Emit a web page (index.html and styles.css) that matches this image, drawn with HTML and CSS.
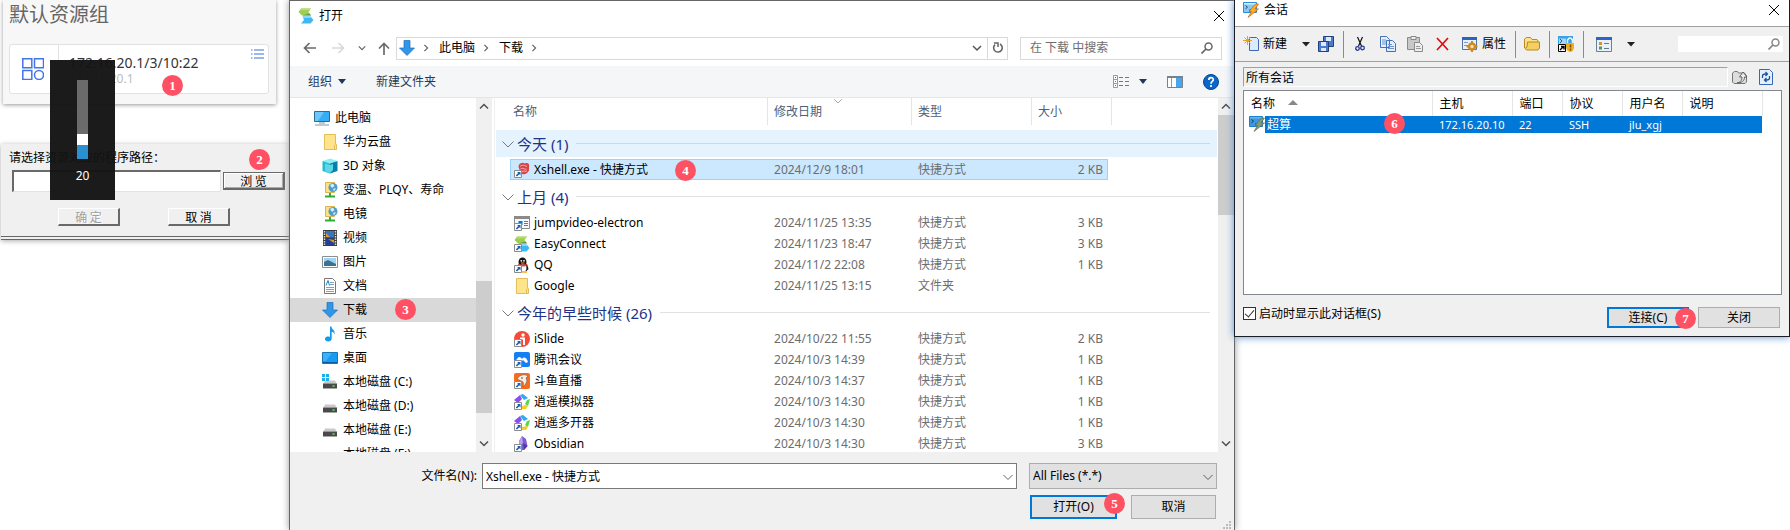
FILE: index.html
```html
<!DOCTYPE html>
<html lang="zh-CN">
<head>
<meta charset="utf-8">
<title>打开</title>
<link rel="stylesheet" href="styles.css">
</head>
<body>
<svg class="defs" aria-hidden="true">
  <symbol id="logo" viewBox="0 0 16 16"><path d="M3 .5h10L10.500 4 13 7.500H4L.5 4z" fill="#9fce4e"/><path d="M3 .5h10l-1.500 1.800H1.800z" fill="#b9dc78"/><path d="M4 7.500h9l-1.500-2z" fill="#5f9a4a"/><path d="M4.500 8.500h8L15.500 12l-3 3.500H3L6 12z" fill="#3db8f0"/><path d="M4.500 8.500h8l1.300 1.500H5.300z" fill="#86d5f7"/></symbol>
  <symbol id="down" viewBox="0 0 16 16"><path d="M5 .5h6V8h4.500L8 15.500.5 8H5z" fill="#2f96e8" stroke="#1b6fc0" stroke-width=".7"/></symbol>
  <symbol id="pc" viewBox="0 0 16 16"><path d="M.5 1.500h15v10H.5z" fill="#35aef5" stroke="#2c6c96"/><path d="M1 2h9L4 11H1z" fill="#6cc8fa"/><path d="M5 13h6M1 15h14" stroke="#7d96a7"/></symbol>
  <symbol id="folder" viewBox="0 0 16 16"><path d="M2.500.5h11v10h1v5h-12z" fill="#ffe48c" stroke="#e2bf55"/><path d="M12.500 11v4.500" stroke="#e2bf55"/></symbol>
  <symbol id="cube" viewBox="0 0 16 16"><path d="M.5 3 8 .5 15.500 3 8 5.500z" fill="#8ff0f4"/><path d="M.5 3 8 5.500v10L.5 13z" fill="#25b9d2"/><path d="M15.500 3 8 5.500v10l7.500-2.500z" fill="#0a7fa6"/><path d="M3 5.500 8 7l3-1v6l-3 3-5-2z" fill="#5ad7e8"/></symbol>
  <symbol id="net" viewBox="0 0 16 16"><path d="M3.500.5h9v10h-9z" fill="#ffe082" stroke="#d9b44a"/><circle cx="11" cy="5.500" r="4.500" fill="#4f9bcb"/><path d="M8 3l3-1.500L12.500 4 10 6zM11 7l3-1-2 3.500z" fill="#d8eef7"/><path d="M8 11v3.500M3 14.500h10" stroke="#2fae36" stroke-width="2"/></symbol>
  <symbol id="video" viewBox="0 0 16 16"><path d="M1 0h14v16H1z" fill="#3a3a3a"/><path d="M4 1h8v6.500H4z" fill="#3674c9"/><path d="M4 8.500h8V15H4z" fill="#233f99"/><path d="M4 3l4 4H4zM6 9l6 4v-3z" fill="#d79a28"/><path d="M2.500 1v14M13.500 1v14" stroke="#ddd" stroke-width="1.500" stroke-dasharray="1.500 1"/></symbol>
  <symbol id="image" viewBox="0 0 16 16"><path d="M.5 2.500h15v11H.5z" fill="#fff" stroke="#8d8d8d"/><path d="M2 4h12v8H2z" fill="#9fd4f2"/><path d="M2 8l4-2 8 4v2H2z" fill="#3d7390"/></symbol>
  <symbol id="doc" viewBox="0 0 16 16"><path d="M2.500.5h8l3 3v12h-11z" fill="#fff" stroke="#777"/><path d="M8 4.500h4M8 6.500h4M4 9.500h8M4 11.500h8M4 13.500h8" stroke="#7fa1bb"/><path d="M4 7.500l2-5 1.500 5" stroke="#1c7fc6" fill="none"/></symbol>
  <symbol id="music" viewBox="0 0 16 16"><path d="M8 .5h1.500c0 3 4 3.500 3 8-.5-2-1.500-2.500-2.800-2.800V12.500C9.700 17 2 16 3 12.500c.8-2 3-2.500 5-1.500z" fill="#149bea"/></symbol>
  <symbol id="desk" viewBox="0 0 16 16"><path d="M.5 2.500h15v11H.5z" fill="#159bf2" stroke="#1974b4"/><path d="M1 3h9l-6 8H1z" fill="#3bb1fa"/><path d="M1 12.500h14" stroke="#0c5c9e"/></symbol>
  <symbol id="disk" viewBox="0 0 16 16"><path d="M3 6.500h10l1.500 3h-13z" fill="#c9c9c9"/><path d="M1 9.500h14v5H1z" fill="#4a4a4a"/><path d="M10.500 12h2" stroke="#4bf04f" stroke-width="1.500"/></symbol>
  <symbol id="diskc" viewBox="0 0 16 16"><use href="#disk"/><path d="M0 0h3v3H0zM4 0h3v3H4zM0 4h3v3H0zM4 4h3v3H4z" fill="#1bb1e7"/></symbol>
  <symbol id="short" viewBox="0 0 16 16"><path d="M.5 8.500h7v7h-7z" fill="#fff" stroke="#8c8c8c"/><path d="M3 10h3.500v3.500L5.300 12.300 3 14.600 1.800 13.400 4.200 11z" fill="#1d5eae"/></symbol>
  <symbol id="xshell" viewBox="0 0 16 16"><path d="M4.500 5C4.500 1 9 0 11 1.500c3-1.500 5 1 4 4 1 6-5 8-8 6z" fill="#d9444a"/><path d="M6 4.500c2-2 5-1 7 0M6.500 7c3-2 4 1 6 0M8 10c2-2 3 0 5-1" stroke="#ffb9b3" fill="none"/><use href="#short"/></symbol>
  <symbol id="jump" viewBox="0 0 16 16"><path d="M.5 1.500h15v12H.5z" fill="#f8f8f8" stroke="#8a8a8a"/><path d="M0 1h16v3H0z" fill="#8a8a8a"/><path d="M4.500 6h4v4h-4z" fill="#0874ce"/><path d="M10 6.500h4M10 8.500h4M10 10.500h4" stroke="#777"/><use href="#short"/></symbol>
  <symbol id="easy" viewBox="0 0 16 16"><use href="#logo"/><use href="#short"/></symbol>
  <symbol id="qq" viewBox="0 0 16 16"><ellipse cx="8.500" cy="5" rx="4" ry="4.500" fill="#111"/><path d="M4.500 7h8.500l1.500 5-2 2H5z" fill="#111"/><ellipse cx="9" cy="11" rx="3.500" ry="3.500" fill="#fff"/><circle cx="7.300" cy="3.800" r=".9" fill="#fff"/><circle cx="10" cy="3.800" r=".9" fill="#fff"/><path d="M4.500 7.500c3 1.500 6 1.500 8.500 0" stroke="#e53a2f" stroke-width="1.700" fill="none"/><path d="M8 15h5" stroke="#f5a91d" stroke-width="1.500"/><path d="M7 6h3.500" stroke="#f5a91d"/><use href="#short"/></symbol>
  <symbol id="islide" viewBox="0 0 16 16"><circle cx="8" cy="8" r="8" fill="#f44b38"/><circle cx="9" cy="4" r="1.700" fill="#fff"/><path d="M6 7.500h4V14" stroke="#fff" stroke-width="2" fill="none"/><use href="#short"/></symbol>
  <symbol id="tencent" viewBox="0 0 16 16"><rect width="16" height="15" rx="2" fill="#1480f4"/><path d="M2 9c2-6 5-4 6-2 2-3 5-1 6 3l-2 1-3-3-3 3z" fill="#fff"/><use href="#short"/></symbol>
  <symbol id="douyu" viewBox="0 0 16 16"><rect width="16" height="16" rx="2" fill="#f76b1c"/><path d="M3 6c3-5 8-5 11-3l-2 2c2 3 0 6-3 9 1-4 0-6-2-6z" fill="#f5eee4" stroke="#7a6354" stroke-width=".7"/><circle cx="8" cy="5" r=".8" fill="#444"/><use href="#short"/></symbol>
  <symbol id="xiao" viewBox="0 0 16 16"><path d="M0 6l6-5 2 4-4 4z" fill="#8a4df2"/><path d="M6 1l3-1 5 4-4 2z" fill="#30a9ee"/><path d="M13 6l3-1-2 7-3-2z" fill="#5ad64d"/><path d="M14 12l-2 3H8v-3l4-1z" fill="#f2cd22"/><use href="#short"/></symbol>
  <symbol id="obs" viewBox="0 0 16 16"><path d="M8 0l4 3 1.500 7L10 14H6L5 5z" fill="#7d5cd1"/><path d="M8 0l1 7-3 3-1-5z" fill="#b7a0f1"/><path d="M9 7l4.500 3L10 14z" fill="#5434ab"/><use href="#short"/></symbol>
  <symbol id="session" viewBox="0 0 16 16"><path d="M.5 .5h13v10H.5z" fill="#8cc8f4" stroke="#2b8bd4"/><path d="M1 1h12v1.500H1z" fill="#d5ecfc"/><path d="M2.500 3.500l2 1.700-2 1.600M6 8h2.500" stroke="#174f8b" fill="none"/><path d="M12.500 2h3L12 7h3.500L5 15.500 8.500 9.500H6z" fill="#ffae20" stroke="#c8601b" stroke-width=".7"/></symbol>
  <symbol id="session-on" viewBox="0 0 16 16"><path d="M.5 .5h13v10H.5z" fill="#3f97dc" stroke="#1f7ed0"/><path d="M1 1h12v1.500H1z" fill="#6bb2e6"/><path d="M2.500 3.500l2 1.700-2 1.600M6 8h2.500" stroke="#0d3f78" fill="none"/><path d="M12.500 2h3L12 7h3.500L5 15.500 8.500 9.500H6z" fill="#859b6c" stroke="#5d6f62" stroke-width=".7"/></symbol>
  <symbol id="chev" viewBox="0 0 10 10"><path d="M1 3l4 4 4-4" fill="none" stroke="currentColor" stroke-width="1.500"/></symbol>
  <symbol id="thin" viewBox="0 0 12 12"><path d="M.5 3.500L6 9l5.500-5.500" fill="none" stroke="currentColor"/></symbol>
  <symbol id="close" viewBox="0 0 10 10"><path d="M0 0l10 10M10 0L0 10" stroke="#000" fill="none"/></symbol>
  <symbol id="glass" viewBox="0 0 12 12"><circle cx="7.500" cy="4.500" r="3.500" fill="none" stroke="currentColor" stroke-width="1.500"/><path d="M5 7L.5 11.500" stroke="currentColor" stroke-width="1.700"/></symbol>
</svg>

<main class="stage">
  <section class="left">
    <div class="resource">
      <h1>默认资源组</h1>
      <div class="card">
        <div class="card-icon"><svg width="22" height="22" viewBox="0 0 22 22" fill="none" stroke="#4475e8" stroke-width="1.500"><path d="M.8.8h9v9h-9zM12.500.8h9v9h-9zM.8 12.500h9v9h-9z"/><circle cx="17" cy="17" r="4.500"/></svg></div>
        <div class="card-text"><strong>172.16.20.1/3/10:22</strong><small>172.16.20.1</small></div>
        <svg class="menu" width="13" height="10" viewBox="0 0 13 10"><path d="M0 1h1.500M3 1h10M0 5h1.500M3 5h10M0 9h1.500M3 9h10" stroke="#3b6fe0"/></svg>
        <span class="badge b1">1</span>
      </div>
    </div>
    <form class="legacy">
      <label for="path">请选择资源对应的程序路径：</label>
      <div class="legacy-row"><input id="path" type="text"><button type="button" class="raised default">浏 览</button></div>
      <div class="legacy-actions"><button type="button" class="raised" disabled>确 定</button><button type="button" class="raised">取 消</button></div>
      <span class="badge b2">2</span>
    </form>
    <div class="volume"><div class="track"><i></i><b></b></div><span>20</span></div>
  </section>

  <section class="dialog">
    <header class="title"><svg width="16" height="16"><use href="#logo"/></svg><span>打开</span><button aria-label="关闭"><svg width="10" height="10"><use href="#close"/></svg></button></header>
    <nav class="nav">
      <button class="w28" aria-label="后退"><svg width="13" height="12" viewBox="0 0 13 12" fill="none" stroke="#6b6b6b" stroke-width="1.700"><path d="M13 6H1.500M6.500 1l-5 5 5 5"/></svg></button>
      <button class="w28" aria-label="前进"><svg width="13" height="12" viewBox="0 0 13 12" fill="none" stroke="#d9d9d9" stroke-width="1.700"><path d="M0 6h11.500M6.500 1l5 5-5 5"/></svg></button>
      <button class="w18" aria-label="历史"><svg width="8" height="8"><use href="#chev"/></svg></button>
      <button class="w23" aria-label="上移"><svg width="12" height="13" viewBox="0 0 12 13" fill="none" stroke="#6b6b6b" stroke-width="1.700"><path d="M6 13V1.500M1 6.500l5-5 5 5"/></svg></button>
      <div class="address"><svg width="16" height="16"><use href="#down"/></svg><svg class="crumb" width="8" height="8"><use href="#chev"/></svg><a href="#pc-item">此电脑</a><svg class="crumb" width="8" height="8"><use href="#chev"/></svg><a href="#dl-item">下载</a><svg class="crumb" width="8" height="8"><use href="#chev"/></svg>
        <button class="drop" aria-label="展开"><svg width="10" height="10"><use href="#chev"/></svg></button><button class="refresh" aria-label="刷新"><svg width="12" height="12" viewBox="0 0 12 12"><path d="M8 2a4.300 4.300 0 1 1-5 .6" fill="none" stroke="#666" stroke-width="1.600"/><path d="M2 1h4v4" fill="none" stroke="#666" stroke-width="1.500"/></svg></button></div>
      <div class="search"><input type="text" aria-label="搜索" placeholder="在 下载 中搜索"><svg width="12" height="12"><use href="#glass"/></svg></div>
    </nav>
    <div class="tools"><button>组织<svg width="8" height="5" viewBox="0 0 8 5"><path d="M0 0h8L4 5z" fill="#1e395b"/></svg></button><button>新建文件夹</button><span class="grow"></span>
      <button class="view" aria-label="视图"><svg width="16" height="13" viewBox="0 0 16 13"><path d="M.5.500h4v12h-4zM.5 4.500h4M.5 8.500h4" fill="#fff" stroke="#999"/><path d="M6 2.500h10M6 6.500h10M6 10.500h10" stroke="#777" stroke-dasharray="4 2"/><path d="M2 2h1v1H2z" fill="#3a7a3a"/><path d="M2 6h1v1H2z" fill="#2a87d8"/><path d="M2 10h1v1H2z" fill="#c33"/></svg><svg width="8" height="5" viewBox="0 0 8 5"><path d="M0 0h8L4 5z" fill="#1e395b"/></svg></button>
      <button aria-label="预览窗格"><svg width="16" height="12" viewBox="0 0 16 12"><path d="M.5.500h15v11H.5z" fill="#fff" stroke="#77828c"/><path d="M0 1h16" stroke="#77828c" stroke-width="2"/><path d="M4.500 2v9" stroke="#999"/><path d="M9 2h6v9H9z" fill="#4aa6ec"/></svg></button>
      <button aria-label="帮助"><svg width="16" height="16" viewBox="0 0 16 16"><circle cx="8" cy="8" r="7.500" fill="#0a66c8" stroke="#07448f"/><path d="M5.800 6c0-3 4.500-3 4.500-.3C10.300 7.500 8 7.500 8 9.700M8 11v2" fill="none" stroke="#fff" stroke-width="1.700"/></svg></button></div>
    <div class="browser">
      <ul class="tree">
        <li class="root" id="pc-item"><svg><use href="#pc"/></svg>此电脑</li>
        <li><svg><use href="#folder"/></svg>华为云盘</li>
        <li><svg><use href="#cube"/></svg>3D 对象</li>
        <li><svg><use href="#net"/></svg>变温、PLQY、寿命</li>
        <li><svg><use href="#net"/></svg>电镜</li>
        <li><svg><use href="#video"/></svg>视频</li>
        <li><svg><use href="#image"/></svg>图片</li>
        <li><svg><use href="#doc"/></svg>文档</li>
        <li class="on" id="dl-item"><svg><use href="#down"/></svg>下载<span class="badge b3">3</span></li>
        <li><svg><use href="#music"/></svg>音乐</li>
        <li><svg><use href="#desk"/></svg>桌面</li>
        <li><svg><use href="#diskc"/></svg>本地磁盘 (C:)</li>
        <li><svg><use href="#disk"/></svg>本地磁盘 (D:)</li>
        <li><svg><use href="#disk"/></svg>本地磁盘 (E:)</li>
        <li><svg><use href="#disk"/></svg>本地磁盘 (F:)</li>
      </ul>
      <div class="bar"><svg class="up"><use href="#chev"/></svg><i class="lead"></i><i class="thumb tall"></i><i class="grow"></i><svg><use href="#chev"/></svg></div>
      <div class="files">
        <table>
          <colgroup><col class="c-in"><col class="c-name"><col class="c-date"><col class="c-type"><col class="c-size"><col class="c-gap"><col></colgroup>
          <thead><tr><th colspan="2" class="first">名称</th><th><svg class="sort" width="8" height="8"><use href="#thin"/></svg>修改日期</th><th>类型</th><th colspan="2">大小</th><th></th></tr></thead>
          <tbody>
            <tr class="group hot"><td colspan="7"><div><svg><use href="#thin"/></svg>今天 (1)<hr></div></td></tr>
            <tr class="sel"><td></td><td><div class="nm"><svg><use href="#xshell"/></svg>Xshell.exe - 快捷方式<span class="badge b4">4</span></div></td><td>2024/12/9 18:01</td><td>快捷方式</td><td>2 KB</td></tr>
          </tbody>
          <tbody>
            <tr class="group"><td colspan="7"><div><svg><use href="#thin"/></svg>上月 (4)<hr></div></td></tr>
            <tr><td></td><td><div class="nm"><svg><use href="#jump"/></svg>jumpvideo-electron</div></td><td>2024/11/25 13:35</td><td>快捷方式</td><td>3 KB</td></tr>
            <tr><td></td><td><div class="nm"><svg><use href="#easy"/></svg>EasyConnect</div></td><td>2024/11/23 18:47</td><td>快捷方式</td><td>3 KB</td></tr>
            <tr><td></td><td><div class="nm"><svg><use href="#qq"/></svg>QQ</div></td><td>2024/11/2 22:08</td><td>快捷方式</td><td>1 KB</td></tr>
            <tr><td></td><td><div class="nm"><svg><use href="#folder"/></svg>Google</div></td><td>2024/11/25 13:15</td><td>文件夹</td><td></td></tr>
          </tbody>
          <tbody>
            <tr class="group"><td colspan="7"><div><svg><use href="#thin"/></svg>今年的早些时候 (26)<hr></div></td></tr>
            <tr><td></td><td><div class="nm"><svg><use href="#islide"/></svg>iSlide</div></td><td>2024/10/22 11:55</td><td>快捷方式</td><td>2 KB</td></tr>
            <tr><td></td><td><div class="nm"><svg><use href="#tencent"/></svg>腾讯会议</div></td><td>2024/10/3 14:39</td><td>快捷方式</td><td>1 KB</td></tr>
            <tr><td></td><td><div class="nm"><svg><use href="#douyu"/></svg>斗鱼直播</div></td><td>2024/10/3 14:37</td><td>快捷方式</td><td>1 KB</td></tr>
            <tr><td></td><td><div class="nm"><svg><use href="#xiao"/></svg>逍遥模拟器</div></td><td>2024/10/3 14:30</td><td>快捷方式</td><td>1 KB</td></tr>
            <tr><td></td><td><div class="nm"><svg><use href="#xiao"/></svg>逍遥多开器</div></td><td>2024/10/3 14:30</td><td>快捷方式</td><td>1 KB</td></tr>
            <tr><td></td><td><div class="nm"><svg><use href="#obs"/></svg>Obsidian</div></td><td>2024/10/3 14:30</td><td>快捷方式</td><td>3 KB</td></tr>
          </tbody>
        </table>
      </div>
      <div class="bar"><svg class="up"><use href="#chev"/></svg><i class="thumb short"></i><i class="grow"></i><svg><use href="#chev"/></svg></div>
    </div>
    <form class="foot">
      <label for="fname">文件名(N):</label>
      <div class="combo"><input id="fname" type="text" value="Xshell.exe - 快捷方式"><svg width="10" height="10"><use href="#thin"/></svg></div>
      <div class="combo filter"><select aria-label="文件类型"><option>All Files (*.*)</option></select><svg width="10" height="10"><use href="#thin"/></svg></div>
      <div class="buttons"><button type="button" class="flat primary">打开(O)</button><button type="button" class="flat">取消</button><span class="badge b5">5</span></div>
      <svg class="grip" width="9" height="9" viewBox="0 0 9 9"><path d="M6 0h2v2H6zM3 3h2v2H3zM6 3h2v2H6zM0 6h2v2H0zM3 6h2v2H3zM6 6h2v2H6z" fill="#bbb"/></svg>
    </form>
  </section>

  <section class="session">
    <header class="stitle"><svg width="16" height="16"><use href="#session"/></svg><span>会话</span><button aria-label="关闭"><svg width="10" height="10"><use href="#close"/></svg></button></header>
    <div class="stools">
      <button class="new"><svg width="16" height="16" viewBox="0 0 16 16"><path d="M6.500 1.500h7l2 2v11h-9z" fill="#dcebfb" stroke="#3f68b0"/><path d="M4.500 0v9M0 4.500h9M1.500 1.500l6 6M7.500 1.500l-6 6" stroke="#e9a11d"/></svg>新建</button>
      <button class="arrow" aria-label="新建选项"><svg width="8" height="5" viewBox="0 0 8 5"><path d="M0 0h8L4 4.500z" fill="#222"/></svg></button>
      <button class="save" aria-label="全部保存"><svg width="16" height="16" viewBox="0 0 16 16"><path d="M5.500.5h10v10h-10z" fill="#4c7bcb" stroke="#22427e"/><path d="M8 1h5v4H8z" fill="#dfe9f8"/><path d="M.5 5.500h10v10H.5z" fill="#4c7bcb" stroke="#22427e"/><path d="M3 6h5v4H3zM3 12h5v3H3z" fill="#dfe9f8"/></svg></button>
      <i class="sep"></i>
      <button class="cut" aria-label="剪切"><svg width="10" height="16" viewBox="0 0 10 16" fill="none"><path d="M2.500 1l4 9M7.500 1l-4 9" stroke="#111" stroke-width="1.200"/><circle cx="2.500" cy="12.500" r="1.800" stroke="#27358f" stroke-width="1.300"/><circle cx="7.500" cy="12" r="1.800" stroke="#27358f" stroke-width="1.300"/></svg></button>
      <button class="copy" aria-label="复制"><svg width="16" height="16" viewBox="0 0 16 16"><path d="M.5.500h6l3 3v8h-9zM6.500 4.500h6l3 3v8h-9z" fill="#e3eefc" stroke="#4470b8"/><path d="M2 4h4M2 6h4M2 8h4M8 8.500h4M8 10.500h6M8 12.500h6" stroke="#6d94d0"/></svg></button>
      <button class="paste" aria-label="粘贴"><svg width="16" height="16" viewBox="0 0 16 16"><path d="M.5 1.500h12v12H.5z" fill="#c8c8c8" stroke="#8a8a8a"/><path d="M4 .5h5v3H4z" fill="#eee" stroke="#888"/><path d="M7.500 6.500h5l3 3v6h-8z" fill="#eee" stroke="#8a8a8a"/><path d="M9 10.500h4M9 12.500h5" stroke="#999"/></svg></button>
      <button class="del" aria-label="删除"><svg width="13" height="14" viewBox="0 0 13 14"><path d="M1 1l11 12M12 1L1 13" stroke="#e00b0b" stroke-width="1.700"/></svg></button>
      <button class="prop"><svg width="16" height="16" viewBox="0 0 16 16"><path d="M.5 1.500h14v12H.5z" fill="#e9f2fc" stroke="#54739f"/><path d="M0 1h15v3H0z" fill="#2c63bd"/><path d="M2 6.500h4M2 9.500h4" stroke="#7a9ac7"/><circle cx="10" cy="10.500" r="3" fill="#f4e0b8" stroke="#d08a24" stroke-width="2.500"/><path d="M10 5v2M10 14v2M4.500 10.500h2M13.500 10.500h2" stroke="#d08a24" stroke-width="2"/></svg>属性</button>
      <i class="sep"></i>
      <button class="tb" aria-label="文件夹"><svg width="16" height="14" viewBox="0 0 16 14"><path d="M.5 11V2l2-1.500h4l1.500 2h5l1 1.500v1" fill="#fbe28c" stroke="#b88a1c"/><path d="M3.500 5h12v6l-1.500 2H2.500L1 11.500 3 10z" fill="#f5cf62" stroke="#b88a1c"/></svg></button>
      <i class="sep"></i>
      <button class="tb" aria-label="锁定"><svg width="16" height="16" viewBox="0 0 16 16"><path d="M0 0h15v8H0z" fill="#3ba2e6"/><path d="M1 2.500h7V8H1z" fill="#a9d5f5"/><path d="M2 3l2 2-2 2" stroke="#1a5a9a" fill="none"/><path d="M9.500 8V4q2.500-4 5 0v4" stroke="#e8f3fb" stroke-width="1.500" fill="none"/><path d="M8 7h8v5q-1 4-4 4-3-1-4-4z" fill="#efae1d"/><path d="M12.500 8.500v3M12.500 12.500v2" stroke="#7a4b04" stroke-width="1.500"/><path d="M.5 8.500h7v7h-7z" fill="#fff" stroke="#000"/><path d="M2 14l3-3M3 10.500h3v3" stroke="#000" stroke-width="1.400" fill="none"/></svg></button>
      <i class="sep"></i>
      <button class="vw" aria-label="视图"><svg width="16" height="15" viewBox="0 0 16 15"><path d="M.5.500h15v14H.5z" fill="#e8f0fa" stroke="#6d7f99"/><path d="M0 0h16v3H0z" fill="#2d63c8"/><path d="M3 5h3v3H3z" fill="#e38c25"/><path d="M3 9.500h3v3H3z" fill="#3aa843"/><path d="M8 6.500h5M8 11.500h5" stroke="#68768a"/></svg><svg width="8" height="5" viewBox="0 0 8 5"><path d="M0 0h8L4 4.500z" fill="#222"/></svg></button>
      <div class="ssearch"><input type="text" aria-label="查找会话"><svg width="12" height="12"><use href="#glass"/></svg></div>
    </div>
    <div class="where"><input type="text" aria-label="位置" value="所有会话" readonly>
      <button aria-label="上一级"><svg width="16" height="14" viewBox="0 0 16 14"><path d="M.5 12V3l2-1.500h3l1 1.500h6l2 3v6l-1.500 1.500H2z" fill="#ddd" stroke="#777"/><path d="M5 13c4-1 5-3 5-6H7.500L11 2l4 5h-2.500c0 4-3 6-7.500 6z" fill="#eee" stroke="#555" stroke-width=".9"/></svg></button>
      <button aria-label="刷新"><svg width="14" height="16" viewBox="0 0 14 16"><path d="M.5.500h10l3 3v12H.5z" fill="#e5f0fd" stroke="#3568b8"/><path d="M3.500 9V7q0-2 3-2H8M6.500 3l2 2-2 2M10.500 7v2q0 2-3 2H6M7.500 9l-2 2 2 2" stroke="#1b53a2" stroke-width="1.300" fill="none"/></svg></button></div>
    <div class="slist">
      <table>
        <colgroup><col class="s188"><col class="s80"><col class="s50"><col class="s60"><col class="s60"><col class="s80"></colgroup>
        <thead><tr><th>名称<svg width="10" height="5" viewBox="0 0 10 5"><path d="M0 5h10L5 0z" fill="#888"/></svg></th><th>主机</th><th>端口</th><th>协议</th><th>用户名</th><th>说明</th></tr></thead>
        <tbody><tr><td><div><svg width="16" height="16"><use href="#session-on"/></svg><span>超算</span><em class="badge b6">6</em></div></td><td>172.16.20.10</td><td>22</td><td>SSH</td><td>jlu_xgj</td><td></td></tr></tbody>
      </table>
    </div>
    <footer class="sfoot"><input type="checkbox" id="boot" checked><label for="boot">启动时显示此对话框(S)</label><button class="flat primary">连接(C)</button><button class="flat">关闭</button><span class="badge b7">7</span></footer>
  </section>
</main>
</body>
</html>
```

FILE: styles.css
```css
* { box-sizing: border-box; }
body { margin: 0; background: #fff; color: #000; font: 12px/16px "Noto Sans", "Noto Sans CJK SC", sans-serif; overflow: hidden; }
button, input, select { font: inherit; color: inherit; margin: 0; border-radius: 0; }
button { border: 0; padding: 0; background: none; display: flex; align-items: center; justify-content: center; white-space: nowrap; }
svg { flex: none; display: block; }
a { color: inherit; text-decoration: none; }
.defs { position: absolute; width: 0; height: 0; }
.grow { flex: 1; }
.stage { display: grid; grid-template-columns: 289px minmax(0, 1fr) 555px; grid-template-rows: minmax(0, 1fr); height: 100vh; align-items: start; }

.badge { position: absolute; width: 21px; height: 21px; border-radius: 50%; background: #ff5163; color: #fff; font: 700 13px/21px "Liberation Serif", serif; text-align: center; }
.b1 { left: 152px; top: 30px; }
.b2 { right: 19px; top: 5px; }
.b3 { left: 105px; top: 1px; }
.b4 { left: 161px; top: 0; }
.b5 { left: 75px; top: -2px; }
.b6 { left: 140px; top: -3px; }
.b7 { right: 93px; top: 13px; }

/* resource group and path prompt */
.left { position: relative; height: 100%; overflow: hidden; }
.resource { margin: 0 13px 0 3px; height: 104px; padding: 0 7px 0 6px; background: #f7f7f7; box-shadow: 0 1px 4px #999; }
.resource h1 { margin: 0; padding: 1px 0 16px; height: 44px; font-size: 20px; line-height: 27px; font-weight: 400; color: #666; }
.card { position: relative; display: flex; height: 50px; border: 1px solid #e2e2e2; border-radius: 3px; background: #fff; }
.card-icon { width: 49px; padding-right: 2px; display: flex; align-items: center; justify-content: center; border-right: 1px solid #e2e2e2; }
.card-text { flex: 1; padding: 9px 0 0 10px; }
.card-text strong { display: block; font-size: 14px; line-height: 18px; font-weight: 400; color: #333; }
.card-text small { display: block; font-size: 12px; line-height: 14px; color: #bbb; }
.menu { margin: 4px 4px; }
.legacy { position: relative; margin: 40px 0 0 1px; height: 96px; padding: 5px 4px 0 8px; background: #f0f0f0; border-bottom: 4px double #666; box-shadow: 0 1px 5px #aaa; font-family: "Noto Sans CJK SC", sans-serif; }
.legacy label { display: block; line-height: 16px; }
.legacy-row { display: flex; align-items: center; gap: 2px; padding: 5px 0 0 3px; }
.legacy-row input { flex: 1; min-width: 0; height: 22px; border: 1px solid #e3e3e3; border-top: 2px solid #696969; border-left: 2px solid #696969; background: #fff; }
.raised { width: 62px; height: 18px; border: 1px solid #fff; border-right: 2px solid #696969; border-bottom: 2px solid #696969; background: #f0f0f0; word-spacing: normal; }
.raised.default { border-top-color: #696969; border-left-color: #696969; box-shadow: inset 1px 1px #fff, inset -1px -1px #aaa; }
.raised:disabled { color: #a0a0a0; text-shadow: 1px 1px #fff; }
.legacy-actions { display: flex; gap: 48px; padding: 16px 0 0 49px; }
.volume { position: absolute; left: 50px; top: 60px; width: 65px; height: 140px; padding-top: 20px; background: rgba(20, 20, 20, .97); color: #fff; display: flex; flex-direction: column; align-items: center; gap: 9px; }
.track { width: 11px; height: 79px; background: #6b6b6b; display: flex; flex-direction: column; justify-content: flex-end; }
.track i { height: 11px; background: #fff; }
.track b { height: 14px; background: #2a90d0; }

/* file dialog */
.dialog { height: 100%; display: flex; flex-direction: column; border: 1px solid #666; border-bottom: 0; background: #fff; box-shadow: 0 0 7px #999; position: relative; }
.title { display: flex; align-items: center; height: 29px; padding: 0 10px 0 8px; gap: 5px; }
.title button { margin-left: auto; }
.nav { display: flex; align-items: center; height: 36px; padding: 0 12px 0 5px; gap: 1px; color: #666; }
.w28 { width: 28px; }
.w18 { width: 18px; }
.w23 { width: 23px; }
.address { flex: 1; display: flex; align-items: center; height: 23px; padding-left: 2px; border: 1px solid #d9d9d9; color: #000; }
.address a { line-height: 20px; }
.crumb { transform: rotate(-90deg); margin: 0 9px 0 7px; color: #666; }
.drop { margin-left: auto; width: 20px; color: #555; }
.refresh { width: 20px; height: 21px; border-left: 1px solid #d9d9d9; }
.search { width: 202px; height: 23px; margin-left: 11px; display: flex; align-items: center; border: 1px solid #d9d9d9; padding: 0 8px 0 9px; }
.search input { flex: 1; min-width: 0; border: 0; padding: 0; outline: 0; }
.search input::placeholder { color: #6d6d6d; opacity: 1; }
.tools { display: flex; align-items: center; height: 32px; padding: 0 15px 0 18px; gap: 20px; background: #f5f6f8; border-bottom: 1px solid #e5e6e8; color: #1e395b; }
.tools button { gap: 6px; }
.tools button:nth-child(2) { margin-left: 10px; }
.view svg + svg { margin-left: 4px; }
.browser { flex: 1; min-height: 0; display: flex; }
.tree { list-style: none; margin: 0; padding: 8px 0 0; width: 186px; overflow: hidden; }
.tree li { position: relative; display: flex; align-items: center; gap: 5px; height: 24px; padding-left: 32px; white-space: nowrap; }
.tree li svg { width: 16px; height: 16px; }
.tree li.root { padding-left: 24px; }
.tree .on { background: #d9d9d9; }
.bar { width: 16px; display: flex; flex-direction: column; background: #f0f0f0; color: #505050; }
.bar svg { width: 16px; height: 17px; padding: 3px; }
.bar .up { transform: rotate(180deg); }
.lead { height: 166px; }
.thumb { background: #cdcdcd; }
.tall { height: 132px; }
.short { height: 100px; }
.files { flex: 1; min-width: 0; overflow: hidden; margin-left: 2px; border-left: 1px solid #f0f0f0; padding: 0 1px; }
table { border-collapse: collapse; table-layout: fixed; width: 100%; }
th, td { padding: 0; font-weight: 400; text-align: left; white-space: nowrap; }
.c-in { width: 14px; }
.c-name { width: 257px; }
.c-date { width: 144px; }
.c-type { width: 120px; }
.c-size { width: 77px; }
.c-gap { width: 3px; }
.files th { position: relative; height: 27px; padding-left: 7px; color: #4c607a; box-shadow: inset 1px 0 #e5e5e5; }
.files th.first { padding-left: 17px; box-shadow: none; }
.sort { position: absolute; left: 67px; top: -1px; color: #777; }
.files td { height: 21px; line-height: 20px; padding-left: 7px; color: #6d6d6d; }
.files td:nth-child(2) { padding-left: 4px; }
.files td:nth-child(5) { text-align: right; padding: 0 5px 0 0; }
.nm { position: relative; display: flex; align-items: center; gap: 4px; color: #000; }
.nm svg { width: 16px; height: 16px; }
.files .group td { padding: 3px 0 2px; }
.files .group.hot td { padding-top: 5px; }
.group div { display: flex; align-items: center; height: 27px; padding: 0 7px 0 6px; font-size: 15px; color: #1e3287; }
.group svg { width: 12px; height: 12px; margin-right: 3px; color: #777; }
.group hr { flex: 1; border: 0; border-top: 1px solid #e2e2e2; margin: 0 0 0 8px; }
.hot div { background: #e5f3ff; }
.group.hot hr { border-color: #c8dae8; }
.sel td:nth-child(n+2) { background: #cce8ff; box-shadow: inset 0 1px #99d1ff, inset 0 -1px #99d1ff; }
.sel td:nth-child(2) { box-shadow: inset 1px 1px #99d1ff, inset 0 -1px #99d1ff; }
.sel td:nth-child(5) { box-shadow: inset -1px 1px #99d1ff, inset 0 -1px #99d1ff; }
.foot { position: relative; display: grid; grid-template-columns: 187px minmax(0, 1fr) 188px; column-gap: 12px; row-gap: 6px; align-content: start; height: 78px; padding: 11px 17px 0 0; background: #f0f0f0; }
.foot label { text-align: right; line-height: 26px; }
.foot label + .combo { margin-left: -7px; }
.combo { position: relative; height: 26px; }
.combo input, .combo select { width: 100%; height: 26px; border: 1px solid #7a7a7a; padding: 0 4px 0 3px; background: #fff; appearance: none; }
.combo.filter select { border-color: #adadad; background: #e1e1e1; }
.combo svg { position: absolute; right: 4px; top: 9px; color: #444; }
.buttons { position: relative; grid-column: 3; display: flex; gap: 14px; padding: 0 1px; }
.flat { flex: 1; height: 24px; border: 1px solid #adadad; background: #e1e1e1; }
.flat.primary { border: 2px solid #0078d7; }
.grip { position: absolute; right: 2px; bottom: 0; }

/* session manager */
.session { position: relative; margin-left: -1px; border: 1px solid #1a1d24; border-top: 0; background: #f0f0f0; box-shadow: 0 0 8px #5a8fd0; }
.stitle { display: flex; align-items: center; gap: 5px; height: 27px; padding: 0 10px 6px 8px; background: #fff; border-bottom: 1px solid #a0a0a0; }
.stitle button { margin-left: auto; }
.stools { display: flex; align-items: center; height: 35px; padding: 0 6px 0 8px; border-bottom: 1px solid #a0a0a0; }
.new, .prop { gap: 4px; }
.arrow { margin-left: 15px; }
.save { margin-left: 8px; }
.sep { width: 1px; height: 27px; margin: 0 8px 0 9px; background: #8c8c8c; }
.cut { margin-left: 3px; }
.copy { margin-left: 15px; }
.paste { margin-left: 11px; }
.del { margin-left: 13px; }
.prop { margin-left: 13px; }
.vw { margin-left: 4px; gap: 15px; }
.ssearch { width: 105px; height: 16px; margin-left: auto; display: flex; align-items: center; background: #fff; padding-right: 3px; color: #888; }
.ssearch input { flex: 1; min-width: 0; height: 16px; border: 0; padding: 0; }
.where { display: flex; align-items: center; padding: 5px 16px 3px 8px; }
.where input { flex: 1; min-width: 0; height: 20px; border: 1px solid #fff; border-top-color: #a0a0a0; border-left-color: #a0a0a0; padding: 0 2px; background: #f0f0f0; }
.where button { margin-left: 4px; }
.where button + button { margin-left: 11px; }
.slist { min-height: 205px; margin: 0 7px 0 8px; border: 1px solid #828790; background: #fff; }
.slist table { width: 518px; }
.s188 { width: 188px; }
.s80 { width: 80px; }
.s50 { width: 50px; }
.s60 { width: 60px; }
.slist th { height: 25px; padding-left: 7px; border-right: 1px solid #e5e5e5; }
.slist th svg { display: inline-block; margin-left: 13px; vertical-align: 3px; }
.slist td { height: 17px; line-height: 17px; padding-left: 7px; background: #0078d7; color: #fff; font-size: 11px; }
.slist td:first-child { padding: 0; background: none; font-size: 12px; }
.slist td div { position: relative; display: flex; padding-left: 5px; }
.slist td span { flex: 1; padding-left: 2px; background: #0078d7; }
.slist .badge { font-size: 13px; }
.sfoot { position: relative; display: flex; align-items: flex-start; height: 41px; padding: 12px 9px 0 8px; }
.sfoot input { appearance: none; width: 13px; height: 13px; border: 1px solid #333; background: #fff; display: grid; place-items: center; }
.sfoot input:checked::after { content: ""; width: 4px; height: 8px; margin-top: -2px; border: solid #333; border-width: 0 1px 1px 0; transform: rotate(40deg); }
.sfoot label { margin: -1px auto 0 3px; }
.sfoot .flat { flex: none; width: 82px; height: 21px; margin-left: 9px; }
```
